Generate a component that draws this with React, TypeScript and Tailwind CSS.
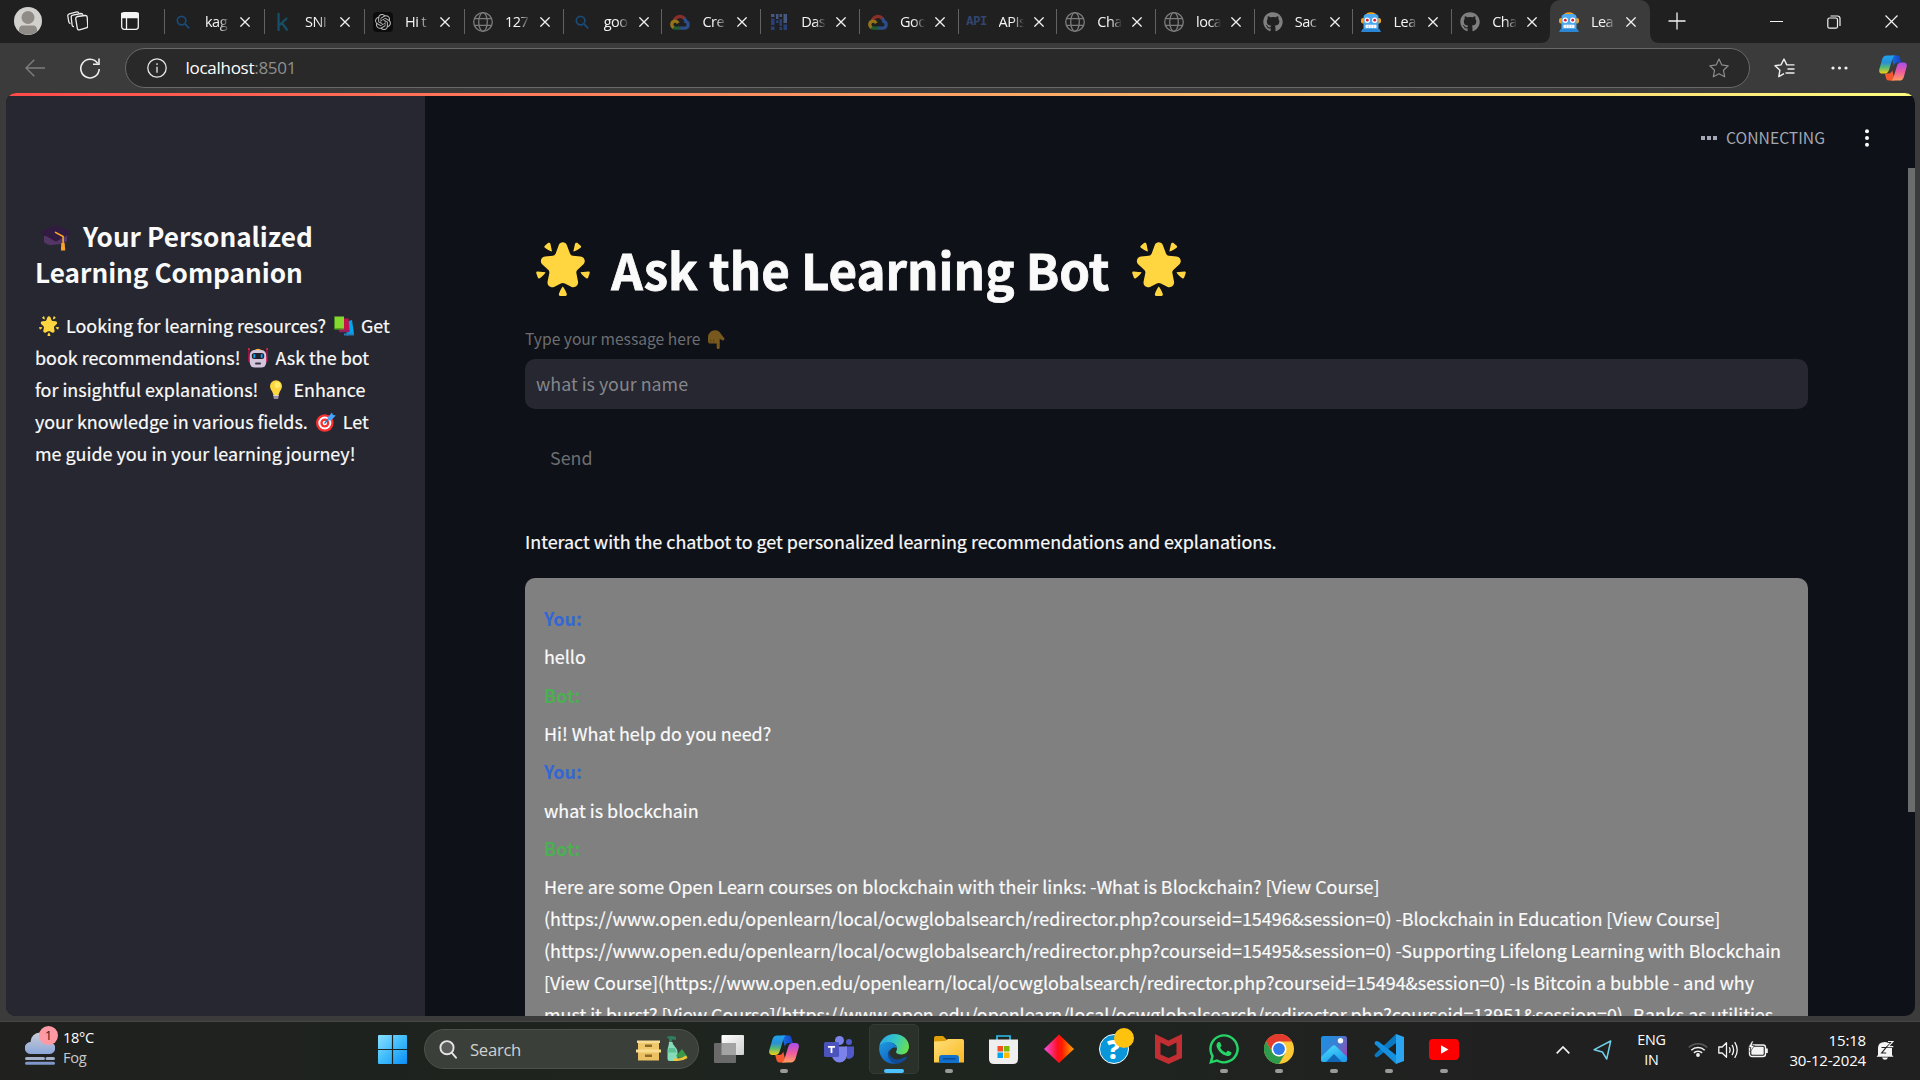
import React, { ReactNode } from "react";
import { FaGithub, FaWhatsapp } from "react-icons/fa";
import { SiOpenai } from "react-icons/si";

/* ---------- emoji drawings ---------- */

function StarEmoji({ className }: { className: string }) {
  return (
    <svg viewBox="0 0 54 54" className={className} fill="#ffd640">
      <path d="M22.7 3.2C24.2-.6 29.4-.6 30.900 3.200L34 11.500C34.400 12.700 35.500 13.600 36.800 13.700L44.600 14.500C48.600 15 50.200 19.800 47.200 22.500L41.600 27.700C40.600 28.600 40.100 29.900 40.400 31.300L42 39.500C42.800 43.500 38.800 46.500 35.200 44.700L28.900 41.400C27.600 40.700 26.100 40.700 24.800 41.400L18.500 44.700C14.900 46.500 10.800 43.500 11.600 39.500L13.300 31.300C13.600 29.900 13.100 28.600 12.100 27.700L6.400 22.500C3.400 19.800 5 15 9 14.500L16.800 13.700C18.100 13.600 19.200 12.700 19.700 11.500Z" />
      <path d="M12.300 .8C13.300.5 14.200 1 14.500 2L16 9.500C14 9.200 10.500 7.500 8.600 5.600C8.200 5 8.300 4.300 8.800 3.800ZM41.200.8C40.200.5 39.300 1 39 2L37.300 9.500C39.500 9.200 43 7.500 44.800 5.600C45.300 5 45.200 4.300 44.700 3.800ZM.3 31.200C0 30.300.6 29.500 1.500 29.500L9.600 30.300C8.400 32.500 6 35 3.700 36.300C3 36.700 2.200 36.500 1.900 35.800ZM53.700 31.200C54 30.300 53.400 29.500 52.500 29.500L44.400 30.300C45.600 32.500 48 35 50.300 36.300C51 36.700 51.800 36.500 52.100 35.800ZM26.800 44.500C28.300 46.200 30 49.500 30.800 52C31 53 30.500 53.800 29.500 54H24.200C23.200 53.800 22.600 53 22.900 52C23.600 49.500 25.200 46.200 26.800 44.500Z" />
    </svg>
  );
}

function CapEmoji({ className }: { className: string }) {
  return (
    <svg viewBox="0 0 30 26" className={className}>
      <path d="M3 11v6c2 3 7 3.500 12 2.500 5 0 9-1 11-3.500v-6z" fill="#533566" />
      <path d="M13.500.5c.8-.4 2-.4 2.800 0l12.900 6c.9.4.9 1.500 0 2L16.300 16c-.8.500-2 .500-2.800 0L.8 8.500c-.9-.5-.9-1.600 0-2z" fill="#321b41" />
      <path d="M14.500 7.300l7.600 4.200v7.500" fill="none" stroke="#ffa92b" strokeWidth="1.500" strokeLinecap="round" />
      <path d="M20.300 18h3.400l.5 7.500h-4.300z" fill="#f9a32b" />
    </svg>
  );
}

function BooksEmoji({ className }: { className: string }) {
  return (
    <svg viewBox="0 0 20 20" className={className}>
      <path d="M11 6l7-2 2 14-7 1.500z" fill="#00a6ed" />
      <path d="M10 17.500h10v2H10z" fill="#257eb8" />
      <path d="M6 2.500h8.500l1 12H6z" fill="#c5114d" />
      <path d="M4.500 14h11v2.300h-10z" fill="#902060" />
      <path d="M.5.500H10v12.300H.5z" fill="#86d72f" />
      <path d="M0 1l.8-.5v12H10v1.300H1.500c-1 0-1.500-.5-1.500-1.500z" fill="#44911b" />
    </svg>
  );
}

function RobotFaceEmoji({ className }: { className: string }) {
  return (
    <svg viewBox="0 0 20 20" className={className}>
      <path d="M.4 1.500h1.200V9h1v5H1.500C.6 14 .2 13.500.2 12.500zM19.600 1.500h-1.200V9h-1v5h1.100c.9 0 1.300-.5 1.300-1.500z" fill="#ca0b4a" />
      <circle cx=".9" cy="1" r=".9" fill="#f8312f" />
      <circle cx="19.100" cy="1" r=".9" fill="#f8312f" />
      <path d="M7 2.500Q7 .700 10 .700t3 1.800z" fill="#ffb02e" />
      <rect x="1.800" y="2" width="16.400" height="17.600" rx="5" fill="#d3c6dc" />
      <rect x="3.800" y="5" width="12.400" height="6" rx="2.500" fill="#241f2b" />
      <rect x="5.300" y="6" width="2" height="4" rx="1" fill="#00a6ed" />
      <rect x="12.700" y="6" width="2" height="4" rx="1" fill="#00a6ed" />
      <rect x="7" y="14.500" width="6" height="2" rx="1" fill="#3b3146" />
    </svg>
  );
}

function BulbEmoji({ className }: { className: string }) {
  return (
    <svg viewBox="0 0 20 20" className={className}>
      <path d="M10 .2a6 6 0 0 1 6 6c0 3.200-2.200 4.200-2.900 7.300-.2 1-.8 1.500-1.600 1.500h-3c-.8 0-1.400-.5-1.600-1.500C6.200 10.400 4 9.400 4 6.200a6 6 0 0 1 6-6z" fill="#fcd53f" />
      <circle cx="11.500" cy="5" r="3" fill="#fff478" opacity=".75" />
      <path d="M7.500 15h5v2.500c0 1-.8 1.500-1.500 1.500H9c-.7 0-1.500-.5-1.500-1.500z" fill="#998ea4" />
      <path d="M7.200 15h5.600v1H7.200z" fill="#d3d3d3" />
    </svg>
  );
}

function TargetEmoji({ className }: { className: string }) {
  return (
    <svg viewBox="0 0 20 20" className={className}>
      <circle cx="8.800" cy="11" r="8.800" fill="#f8312f" />
      <circle cx="8.800" cy="11" r="6.500" fill="#fff" />
      <circle cx="8.800" cy="11" r="4.500" fill="#f8312f" />
      <circle cx="8.800" cy="11" r="2.200" fill="#fff" />
      <path d="M8.500 11.500l5-5.500" stroke="#1377be" strokeWidth="1.200" />
      <path d="M11.500 5.500l4.500-5 .8 2.300 2.900.8-4.600 5-3.300-.4z" fill="#46a4fb" />
    </svg>
  );
}

function PointDownEmoji({ className }: { className: string }) {
  return (
    <svg viewBox="0 0 17 19" className={className}>
      <path d="M1.500 3C3 1 4.500.2 7 .2c3.500 0 5 1.800 6.500 4.500l2.700 3.400c1 1.600-1 3-2.500 1.900l-2-1.200v8.600c0 2-3 2-3 0v-3.800H2.500C.8 13.600 0 12.600 0 11V7C0 5.300.500 4.200 1.500 3z" fill="#77581e" />
      <path d="M2.700 9v4M5.700 9v4.200" stroke="#5c3f16" strokeWidth=".7" />
    </svg>
  );
}

/* ---------- favicons ---------- */

function SearchFav() {
  return (
    <svg viewBox="0 0 14 14" className="size-[14px]" fill="none" stroke="#194a78" strokeWidth="1.700">
      <circle cx="5.600" cy="5.600" r="4.300" />
      <path d="M8.900 8.900l4.300 4.500" />
    </svg>
  );
}
function KaggleFav() {
  return (
    <svg viewBox="0 0 12 18" className="h-[18px] w-3" fill="none" stroke="#14506a" strokeWidth="2.200">
      <path d="M1.600 0v18M10 5L2.500 12M4.500 9.500L10.500 17.500" />
    </svg>
  );
}
function OpenAiFav() {
  return (
    <span className="flex size-5 items-center justify-center rounded-[4px] bg-[#0c0c0c]">
      <SiOpenai className="size-4 text-[#b4b4b4]" />
    </span>
  );
}
function GlobeFav() {
  return (
    <svg viewBox="0 0 20 20" className="size-5" fill="none" stroke="#7c7c7c" strokeWidth="1.300">
      <circle cx="10" cy="10" r="9.300" />
      <ellipse cx="10" cy="10" rx="4.300" ry="9.300" />
      <path d="M1.500 6.700h17M1.500 13.300h17" />
    </svg>
  );
}
function CloudFav() {
  return (
    <svg viewBox="0 0 20 16" className="h-4 w-5" fill="none" strokeWidth="3.300">
      <path d="M4.300 6.500A5.900 5.900 0 0 1 14.500 4.600" stroke="#8a2f28" />
      <path d="M14 4.200c1.300 1 1.600 2.300 1.700 3.200 3.300.8 3.400 6.300-.7 6.700h-5" stroke="#2c4d87" />
      <path d="M10.300 14.100H5.200c-1 0-1.500-.2-2.300-.7" stroke="#1f5e33" />
      <path d="M3.500 13.600C1 12 1.100 7.700 4.800 7.200c1.600-.1 2.800.9 3.500 2" stroke="#94731a" />
    </svg>
  );
}
function DashFav() {
  return (
    <svg viewBox="0 0 16 16" className="size-4">
      <path d="M0 0h3.500v3H0zM5 0h2.500v5H5zM12.500 0H16v9h-3.500zM8.500 0H11v3H8.500z" fill="#46587f" />
      <path d="M0 4.500h3.500V11H0zM0 12.500h3.500V16H0zM5 6.500h2.500V9H5zM8.500 5H11v7H8.500zM8.500 13H11v3H8.500zM12.500 10.500H16V16h-3.500z" fill="#283f78" />
    </svg>
  );
}
function ApiFav() {
  return <span className="font-['Liberation_Mono'] text-[12px] leading-5 font-bold tracking-[-0.3px] text-[#33466f]">API</span>;
}
function GithubFav() {
  return <FaGithub className="size-5 text-[#7f7f7f]" />;
}
function BotFav() {
  return (
    <svg viewBox="0 0 20 20" className="size-5">
      <path d="M5.500 1.500Q10-.8 14.500 1.500L15 4H5z" fill="#f59f1d" />
      <rect y="6" width="20" height="5.500" rx="2" fill="#f59f1d" />
      <path d="M2.500 5.500Q2.500 2 6 2h8q3.500 0 3.500 3.500V17h-15z" fill="#4ea9ee" />
      <path d="M1.500 17h17l1.500 3H0z" fill="#2d86d2" />
      <circle cx="6.300" cy="8.200" r="2.700" fill="#fff" />
      <circle cx="13.700" cy="8.200" r="2.700" fill="#fff" />
      <circle cx="6.300" cy="8.200" r="1.400" fill="#d51d2f" />
      <circle cx="13.700" cy="8.200" r="1.400" fill="#d51d2f" />
      <rect x="4.500" y="12.700" width="11" height="3.200" rx="1" fill="#fff" />
      <path d="M7.300 12.700v3.200M10 12.700v3.200M12.700 12.700v3.200" stroke="#a9c6e2" strokeWidth=".7" />
    </svg>
  );
}

function CloseGlyph({ size }: { size: "sm" | "lg" }) {
  return (
    <svg viewBox="0 0 10 10" className={size === "sm" ? "size-[10px]" : "size-[13px]"} fill="none" stroke="#f2f2f2" strokeWidth={size === "sm" ? 1.3 : 0.9}>
      <path d="M.4.4l9.200 9.200M9.600.4L.4 9.600" />
    </svg>
  );
}

function CopilotIcon({ id, className }: { id: string; className: string }) {
  return (
    <svg viewBox="0 0 30 28" className={className}>
      <defs>
        <linearGradient id={id + "a"} x1="0" y1="0" x2="0" y2="1">
          <stop offset="0" stopColor="#1da4ee" />
          <stop offset=".4" stopColor="#2b90d5" />
          <stop offset=".65" stopColor="#53b87a" />
          <stop offset="1" stopColor="#f4cf10" />
        </linearGradient>
        <linearGradient id={id + "b"} x1="0" y1="0" x2="0" y2="1">
          <stop offset="0" stopColor="#a64df0" />
          <stop offset=".5" stopColor="#ee5aa0" />
          <stop offset="1" stopColor="#ff9d62" />
        </linearGradient>
        <linearGradient id={id + "c"} x1="0" y1="0" x2="1" y2="0">
          <stop offset="0" stopColor="#1a6fe0" />
          <stop offset="1" stopColor="#1440c8" />
        </linearGradient>
      </defs>
      <path d="M13 .5h6.500c2.200 0 2.700 1.300 3.200 3.200L23.800 8H20c-2.500 0-3.500 1.500-4.200 3.500z" fill={"url(#" + id + "c)"} />
      <path d="M17 27.500h-6.500c-2.200 0-2.700-1.300-3.200-3.200L6.200 20H10c2.500 0 3.500-1.500 4.200-3.500z" fill="#f4582f" />
      <path d="M8.500.5h9c-2 .5-2.600 2.300-3.200 4.200L10.800 16c-.8 2.600-2 4-4.600 4H3.500C.5 20-.3 18 .3 15.300L3.300 4.700C4.100 2 5.500.5 8.500.5z" fill={"url(#" + id + "a)"} />
      <path d="M21.500 27.500h-9c2-.5 2.600-2.300 3.200-4.200L19.200 12c.8-2.600 2-4 4.600-4h2.700c3 0 3.800 2 3.200 4.700l-3 10.600c-.8 2.700-2.200 4.200-5.200 4.200z" fill={"url(#" + id + "b)"} />
    </svg>
  );
}

/* ---------- browser chrome ---------- */

const tabs: { title: string; icon: ReactNode }[] = [
  { title: "kag", icon: <SearchFav /> },
  { title: "SNI", icon: <KaggleFav /> },
  { title: "Hi t", icon: <OpenAiFav /> },
  { title: "127", icon: <GlobeFav /> },
  { title: "goo", icon: <SearchFav /> },
  { title: "Cre", icon: <CloudFav /> },
  { title: "Das", icon: <DashFav /> },
  { title: "Goo", icon: <CloudFav /> },
  { title: "APIs", icon: <ApiFav /> },
  { title: "Cha", icon: <GlobeFav /> },
  { title: "loca", icon: <GlobeFav /> },
  { title: "Sac", icon: <GithubFav /> },
  { title: "Lea", icon: <BotFav /> },
  { title: "Cha", icon: <GithubFav /> },
];

function TabTitle({ children }: { children: ReactNode }) {
  return (
    <span className="h-5 w-[25px] shrink-0 text-[14.5px] leading-5 tracking-[-0.5px] whitespace-nowrap text-[#f5f5f5] [mask-image:linear-gradient(to_right,black_55%,transparent)]">
      {children}
    </span>
  );
}

function TabBar() {
  return (
    <div className="flex h-[43px] shrink-0 items-stretch bg-[#202020]">
      <div className="flex w-[164px] shrink-0 items-center pb-px">
        <svg viewBox="0 0 28 28" className="ml-[14px] size-7">
          <circle cx="14" cy="14" r="14" fill="#d2d0cd" />
          <circle cx="14" cy="10.500" r="6.500" fill="#8f8c88" />
          <path d="M5 24.500Q4.500 18.500 9 18.500h10q4.500 0 4 6A14 14 0 0 1 5 24.500z" fill="#8f8c88" />
        </svg>
        <svg viewBox="0 0 21 20" className="ml-[25px] h-5 w-[21px]" fill="none" stroke="#ededed" strokeWidth="1.300" strokeLinejoin="round">
          <path d="M10.500 5.500l7.500-1q2-.2 2.200 1.600l.6 9q0 1.500-1.600 1.800l-6.700 1.900q-2 .4-2.200-1.500L8.700 7.600q0-1.800 1.800-2.100z" />
          <path d="M7 15.500q-1.600.3-1.900-1.500L4.200 6.500q-.2-2 1.700-2.300L14 2.500q1.500 0 2 1.400" />
          <path d="M3.500 12.500q-1.400 0-1.700-1.600L.8 5q-.2-1.700 1.500-2.200L10 .8q1.400-.1 1.900 1.200" />
        </svg>
        <svg viewBox="0 0 18 18" className="ml-[33px] size-[18px]" fill="none" stroke="#f4f4f4" strokeWidth="1.300">
          <rect x=".7" y=".7" width="16.600" height="16.600" rx="2.500" />
          <path d="M.7 1.500h16.600v4H.7z" fill="#f4f4f4" />
          <path d="M5.500 5v12" />
        </svg>
      </div>
      {tabs.map((tab, i) => (
        <div key={i} className={i < 3 ? "flex w-[100px] shrink-0 items-center" : "flex w-[98.73px] shrink-0 items-center"}>
          <span className="h-[25px] w-px shrink-0 bg-[#626262]" />
          <span className="ml-2 flex w-5 shrink-0 justify-center">{tab.icon}</span>
          <span className="ml-3 flex">
            <TabTitle>{tab.title}</TabTitle>
          </span>
          <span className="ml-[10px]">
            <CloseGlyph size="sm" />
          </span>
        </div>
      ))}
      <div className="relative flex w-[100px] shrink-0 items-center rounded-t-[10px] bg-[#3b3b3b]">
        <svg viewBox="0 0 10 10" className="absolute bottom-0 -left-[10px] size-[10px]" fill="#3b3b3b">
          <path d="M10 0v10H0Q10 10 10 0z" />
        </svg>
        <svg viewBox="0 0 10 10" className="absolute -right-[10px] bottom-0 size-[10px]" fill="#3b3b3b">
          <path d="M0 0v10h10Q0 10 0 0z" />
        </svg>
        <span className="ml-[9px]">
          <BotFav />
        </span>
        <span className="ml-3 flex">
          <TabTitle>Lea</TabTitle>
        </span>
        <span className="ml-[10px]">
          <CloseGlyph size="sm" />
        </span>
      </div>
      <div className="ml-[18px] flex items-center pb-px">
        <svg viewBox="0 0 18 18" className="size-[18px]" stroke="#f2f2f2" strokeWidth="1.300">
          <path d="M9 .5v17M.5 9h17" />
        </svg>
      </div>
      <div className="ml-auto flex items-center pr-[22px]">
        <span className="h-px w-[13px] bg-[#f2f2f2]" />
        <svg viewBox="0 0 14 14" className="ml-11 size-[14px]" fill="none" stroke="#f2f2f2" strokeWidth="1.200">
          <rect x=".8" y="3" width="9.700" height="10.200" rx="1.800" />
          <path d="M3.500 1h7q2.500 0 2.500 2.500V11" />
        </svg>
        <span className="ml-11">
          <CloseGlyph size="lg" />
        </span>
      </div>
    </div>
  );
}

const starPath = "M10 1l2.800 5.900 6.400.9-4.700 4.500 1.200 6.500L10 15.700l-5.700 3.100 1.200-6.500L.8 7.800l6.400-.9z";

function Toolbar() {
  return (
    <div className="flex h-[50px] shrink-0 items-center bg-[#3b3b3b]">
      <svg viewBox="0 0 20 18" className="ml-[25px] h-[18px] w-5" fill="none" stroke="#7d7d7d" strokeWidth="1.400">
        <path d="M20 9H1M9.300.700L1 9l8.300 8.300" />
      </svg>
      <svg viewBox="0 0 20 21" className="ml-[35px] h-[21px] w-5" fill="none" stroke="#efefef" strokeWidth="1.600">
        <path d="M17.700 5.500A9.200 9.300 0 1 0 19.200 11" />
        <path d="M19 .5v5.800h-6" />
      </svg>
      <div className="ml-[25px] flex h-10 w-[1625px] items-center rounded-full border border-[#696969] bg-[#292929]">
        <svg viewBox="0 0 20 20" className="ml-[21px] size-5" fill="none" stroke="#e8e8e8" strokeWidth="1.300">
          <circle cx="10" cy="10" r="9.200" />
          <path d="M10 8.800v6M10 5.300v1.600" />
        </svg>
        <span className="ml-[18.500px] pb-px text-[17px] leading-6 tracking-[-0.28px] text-white">
          localhost<span className="text-[#8f8f8f]">:8501</span>
        </span>
        <svg viewBox="0 0 20 20" className="mr-[20px] ml-auto size-5" fill="none" stroke="#8c8c8c" strokeWidth="1.200" strokeLinejoin="round">
          <path d={starPath} />
        </svg>
      </div>
      <svg viewBox="0 0 21 20" className="ml-[24px] h-5 w-[21px]" fill="none" stroke="#f0f0f0" strokeWidth="1.400" strokeLinejoin="round">
        <path d="M10 15.700l-5.200 3 1.100-6.500L1 7.800l6-.9L10 1l2.800 5.900h7.700M13.500 11h7M11.500 15h9" />
      </svg>
      <svg viewBox="0 0 17 4" className="ml-9 h-1 w-[17px]" fill="#f0f0f0">
        <circle cx="2" cy="2" r="1.600" />
        <circle cx="8.500" cy="2" r="1.600" />
        <circle cx="15" cy="2" r="1.600" />
      </svg>
      <CopilotIcon id="top" className="ml-[31px] h-[26px] w-7" />
    </div>
  );
}

/* ---------- page ---------- */

function Sidebar() {
  const e = "mr-[3px] ml-1 inline-block size-5 align-[-3px]";
  return (
    <aside className="w-[419px] shrink-0 bg-[#262730] pl-[29px] whitespace-nowrap text-[#fafafa]">
      <h2 className="mt-[122px] text-[26.15px] leading-9 font-bold">
        <CapEmoji className="mr-[6px] ml-[6px] inline-block h-[26px] w-[30px] align-[-4px]" /> Your Personalized
        <br />
        Learning Companion
      </h2>
      <p className="mt-[19px] text-[17.92px] leading-8 [-webkit-text-stroke:0.2px_#fafafa]">
        <StarEmoji className={e} /> Looking for learning resources? <BooksEmoji className={e} /> Get
        <br />
        book recommendations! <RobotFaceEmoji className={e} /> Ask the bot
        <br />
        for insightful explanations! <BulbEmoji className={e} /> Enhance
        <br />
        your knowledge in various fields. <TargetEmoji className={e} /> Let
        <br />
        me guide you in your learning journey!
      </p>
    </aside>
  );
}

const messages: { who: "You:" | "Bot:"; lines: string[] }[] = [
  { who: "You:", lines: ["hello"] },
  { who: "Bot:", lines: ["Hi! What help do you need?"] },
  { who: "You:", lines: ["what is blockchain"] },
  {
    who: "Bot:",
    lines: [
      "Here are some Open Learn courses on blockchain with their links: -What is Blockchain? [View Course]",
      "(https://www.open.edu/openlearn/local/ocwglobalsearch/redirector.php?courseid=15496&session=0) -Blockchain in Education [View Course]",
      "(https://www.open.edu/openlearn/local/ocwglobalsearch/redirector.php?courseid=15495&session=0) -Supporting Lifelong Learning with Blockchain",
      "[View Course](https://www.open.edu/openlearn/local/ocwglobalsearch/redirector.php?courseid=15494&session=0) -Is Bitcoin a bubble - and why",
      "must it burst? [View Course](https://www.open.edu/openlearn/local/ocwglobalsearch/redirector.php?courseid=13951&session=0) -Banks as utilities",
    ],
  },
];

function Main() {
  return (
    <main className="relative flex grow flex-col pl-[100px] text-[17.92px] whitespace-nowrap text-[#fafafa]">
      <div className="mt-7 flex h-7 shrink-0 items-center justify-end self-stretch pr-[46px]">
        <span className="flex gap-[2px]">
          <i className="size-1 bg-[#a3a8b4]" />
          <i className="size-1 bg-[#a3a8b4]" />
          <i className="size-1 bg-[#a3a8b4]" />
        </span>
        <span className="ml-[9px] pb-px text-[15.7px] leading-7 text-[#a3a8b4]">CONNECTING</span>
        <svg viewBox="0 0 4 18" className="ml-10 h-[18px] w-1" fill="#fafafa">
          <circle cx="2" cy="2.200" r="2" />
          <circle cx="2" cy="9" r="2" />
          <circle cx="2" cy="15.800" r="2" />
        </svg>
      </div>
      <h1 className="mt-[84px] text-[49.23px] leading-[66px] font-bold [-webkit-text-stroke:0.8px_#fafafa]">
        <StarEmoji className="mr-[10.5px] ml-[10.5px] inline-block size-[54px] align-[-5.7px]" /> Ask the Learning Bot{" "}
        <StarEmoji className="ml-[11.5px] inline-block size-[54px] align-[-5.7px]" />
      </h1>
      <div className="mt-[23px] flex h-7 items-center text-[15.65px] leading-7 text-[#6d6e72]">
        Type your message here
        <PointDownEmoji className="ml-[7px] h-[19px] w-[17px]" />
      </div>
      <div className="mt-[6px] flex h-[50px] w-[1283px] shrink-0 items-center rounded-[10px] bg-[#262730] pb-px pl-[11px] text-[17.85px] text-[#85868b]">
        what is your name
      </div>
      <div className="mt-6 flex h-12 shrink-0 items-center pl-[25px] text-[17.85px] text-[#6d6e72]">Send</div>
      <p className="mt-[44px] leading-8 [-webkit-text-stroke:0.2px_#fafafa]">
        Interact with the chatbot to get personalized learning recommendations and explanations.
      </p>
      <div className="mt-[21px] flex w-[1283px] flex-col gap-[6.33px] rounded-t-[10px] bg-[#808080] pt-6 pl-[19px] leading-8">
        {messages.map((m, i) => (
          <React.Fragment key={i}>
            <div className={m.who === "You:" ? "font-bold text-[#3367d6]" : "font-bold text-[#4caf50]"}>{m.who}</div>
            <div className="shrink-0 [-webkit-text-stroke:0.2px_#fafafa]">
              {m.lines.map((line, j) => (
                <div key={j}>{line}</div>
              ))}
            </div>
          </React.Fragment>
        ))}
      </div>
      <div className="absolute top-[72px] right-0 h-[644px] w-[7px] bg-[#6b6c6e]" />
    </main>
  );
}

/* ---------- taskbar ---------- */

function EdgeIcon() {
  return (
    <svg viewBox="0 0 30 30" className="size-[30px]">
      <defs>
        <linearGradient id="edgeTop" x1="0" y1=".3" x2="1" y2=".6">
          <stop offset="0" stopColor="#2aa6e8" />
          <stop offset=".5" stopColor="#35c7c4" />
          <stop offset="1" stopColor="#6be04a" />
        </linearGradient>
        <linearGradient id="edgeLeft" x1="0" y1="0" x2=".6" y2="1">
          <stop offset="0" stopColor="#1f9be0" />
          <stop offset="1" stopColor="#0f63bf" />
        </linearGradient>
      </defs>
      <path d="M.3 12.500A15 15 0 0 1 15 0c9 0 15 6 15 12.500 0 5-3.500 8-7.500 8-3 0-5.500-1-5.500-2.500 0-1 1-1.500 1-3.500 0-3-3-6-7.500-6-4.500 0-8 2-10.200 4z" fill="url(#edgeTop)" />
      <path d="M.1 14C1 9.800 6 7.500 10.500 8.200c4.500.6 7.500 3.300 7.500 6.300-2.500-2.500-8 0-8 5.500 0 5 3.500 8.500 8 9.500C8 31.500 0 24 .1 14z" fill="url(#edgeLeft)" />
      <path d="M10.500 15.500c-1.500 7 5 11.500 10.500 9.500 2.500-.8 5-2 6.200-2.300.8-.1 1 .5.500 1.200C25.500 27 22 29.500 18 29.800 10 29 6.500 20 10.500 15.500z" fill="#134a94" />
    </svg>
  );
}

function TaskItem({ children, mark }: { children: ReactNode; mark?: boolean }) {
  return (
    <div className="flex h-[50px] w-[55px] shrink-0 flex-col items-center">
      <div className="flex h-[50px] items-center">{children}</div>
      <span className={mark ? "-mt-[5px] h-1 w-2 shrink-0 rounded-full bg-[#9a9a9a]" : "-mt-[5px] h-1 w-2 shrink-0"} />
    </div>
  );
}

function Taskbar() {
  return (
    <div className="flex h-[59px] shrink-0 items-center border-t border-[#474845] bg-[linear-gradient(90deg,#20211f_0%,#1e231e_25%,#1e251f_50%,#202220_70%,#202020_80%)] pb-1">
      <div className="ml-[25px] flex w-[353px] shrink-0">
        <div className="relative h-[33px] w-[30px]">
          <svg viewBox="0 0 30 33" className="h-[33px] w-[30px]">
            <defs>
              <linearGradient id="fog" x1="0" y1="0" x2="0" y2="1">
                <stop offset="0" stopColor="#c9cdd8" />
                <stop offset="1" stopColor="#8ca6d8" />
              </linearGradient>
            </defs>
            <path d="M6 22a6 6 0 0 1-.5-12 9.500 9.500 0 0 1 19 0A6 6 0 0 1 24 22z" fill="url(#fog)" />
            <path d="M1.500 26.500h17M22 26.500h6.500" stroke="#a5b0c9" strokeWidth="3" strokeLinecap="round" />
            <path d="M1.500 31.300h27" stroke="#7f98c9" strokeWidth="3" strokeLinecap="round" />
          </svg>
          <span className="absolute -top-[6px] left-[14px] flex size-[19px] items-center justify-center rounded-full bg-[#ff99a4] text-[13px] leading-none text-[#262626]">1</span>
        </div>
        <div className="-mt-[5px] ml-2 flex flex-col text-[14.6px] leading-5 tracking-[-0.3px]">
          <span className="text-white">18°C</span>
          <span className="text-[#c9c9c9]">Fog</span>
        </div>
      </div>
      <svg viewBox="0 0 29 29" className="size-[29px] shrink-0">
        <defs>
          <linearGradient id="win" x1="0" y1="0" x2="1" y2="1">
            <stop offset="0" stopColor="#8be0ff" />
            <stop offset=".5" stopColor="#40bcfb" />
            <stop offset="1" stopColor="#0a8ff5" />
          </linearGradient>
        </defs>
        <path d="M0 1q0-1 1-1h12.900v13.900H0zM15.100 0H28q1 0 1 1v12.900H15.100zM0 15.100h13.900V29H1q-1 0-1-1zM15.100 15.100H29V28q0 1-1 1H15.100z" fill="url(#win)" />
      </svg>
      <div className="ml-[17px] flex h-10 w-[275px] shrink-0 items-center rounded-full border border-[#4e514d] bg-[#3b3f3a]">
        <svg viewBox="0 0 18 19" className="ml-[14px] h-[19px] w-[18px]" fill="none" stroke="#e4e4e4" strokeWidth="1.900" strokeLinecap="round">
          <circle cx="8" cy="7.700" r="6.600" fill="#5a5d59" />
          <path d="M12.700 12.700l4.300 5" />
        </svg>
        <span className="ml-[13px] pt-0.5 text-[16.7px] leading-6 tracking-[-0.3px] text-[#d0d0d0]">Search</span>
        <svg viewBox="0 0 52 26" className="mr-[10px] ml-auto h-[26px] w-[52px]">
          <path d="M2 6h21v9H2z" fill="#f0c96c" />
          <path d="M1 4.500h23v2.500H1z" fill="#f7dc94" />
          <path d="M2 16h21v8.500H2z" fill="#ecc163" />
          <path d="M0 13.500h25v3H0z" fill="#f9dd8c" />
          <rect x="9" y="8.500" width="7" height="2.500" fill="#8b6a2a" />
          <rect x="9" y="18.500" width="7" height="2.500" fill="#8b6a2a" />
          <path d="M30.500 1q5-2 9.500 0v3l-4-.5v3h-3V3z" fill="#2f7d5a" />
          <path d="M33 6h3.500c0 4 5 5 5 10v7q0 2-2 2h-6q-2 0-2-2v-7c0-5 1.500-6 1.500-10z" fill="#86dcb9" />
          <path d="M33 12h5.500q2 2 2 4.500h-8.500q0-2.500 1-4.500z" fill="#5cc194" />
          <path d="M40 20l6-7 5.500 8-5 2.500z" fill="#3a9a48" />
          <path d="M37 22q7 2 13-2.500l1.500 2.500q-7 4.500-14.500 2.500z" fill="#f2c53a" />
        </svg>
      </div>
      <div className="flex items-center pl-[2px]">
        <TaskItem>
          <svg viewBox="0 0 30 28" className="h-7 w-[30px]">
            <defs>
              <linearGradient id="tv" x1="0" y1="0" x2="1" y2="1">
                <stop offset="0" stopColor="#fff" />
                <stop offset="1" stopColor="#cfcfcf" />
              </linearGradient>
            </defs>
            <rect x="7.500" width="22.500" height="20" rx="1" fill="url(#tv)" />
            <rect y="8" width="22" height="20" rx="1" fill="#6a6a6a" />
            <path d="M7.500 8H22v12H7.500z" fill="#a3a3a3" />
          </svg>
        </TaskItem>
        <TaskItem mark>
          <CopilotIcon id="bar" className="h-7 w-[30px]" />
        </TaskItem>
        <TaskItem>
          <svg viewBox="0 0 30 27" className="h-[27px] w-[30px]">
            <circle cx="15.500" cy="4.500" r="4.500" fill="#7b83eb" />
            <circle cx="25" cy="6" r="3" fill="#5059c9" />
            <path d="M21 10.500h9V18a5 5 0 0 1-7 4.500z" fill="#5059c9" />
            <path d="M8 10.500h15V19a7.500 7.500 0 0 1-15 0z" fill="#7b83eb" />
            <rect y="6" width="15" height="15" rx="1.500" fill="#4b53bc" />
            <path d="M4 10h7v1.700H8.400V17H6.600v-5.300H4z" fill="#fff" />
          </svg>
        </TaskItem>
        <div className="mx-[2.5px] flex h-[50px] w-[50px] shrink-0 flex-col items-center rounded-[5px] border border-[#343a34] bg-[#2a302a] pt-[9px]">
          <EdgeIcon />
          <span className="mt-[5px] h-1 w-5 shrink-0 rounded-full bg-[#4cc2ff]" />
        </div>
        <TaskItem mark>
          <svg viewBox="0 0 30 27" className="h-[27px] w-[30px]">
            <defs>
              <linearGradient id="fold" x1="0" y1="0" x2="1" y2="1">
                <stop offset="0" stopColor="#ffe07a" />
                <stop offset="1" stopColor="#f8b822" />
              </linearGradient>
            </defs>
            <path d="M0 2q0-2 2-2h7l4 4v5H0z" fill="#e09f08" />
            <path d="M0 5.500L11 5l3-2h14q2 0 2 2v21.500H0z" fill="url(#fold)" />
            <path d="M5 27v-5q0-3 3-3h14q3 0 3 3v5z" fill="#1170cc" />
            <path d="M9 22.800h12.500" stroke="#0a4a94" strokeWidth="1.500" />
          </svg>
        </TaskItem>
        <TaskItem>
          <svg viewBox="0 0 29 29" className="size-[29px]">
            <path d="M8 6V1h13v5" fill="none" stroke="#2bbdf0" strokeWidth="1.700" />
            <path d="M0 4.500h29V24q0 5-5 5H5q-5 0-5-5z" fill="#efefef" />
            <path d="M8.500 11H14v5.500H8.500z" fill="#f25022" />
            <path d="M15 11h5.500v5.500H15z" fill="#7fba00" />
            <path d="M8.500 17.500H14V23H8.500z" fill="#00a4ef" />
            <path d="M15 17.500h5.500V23H15z" fill="#ffb900" />
          </svg>
        </TaskItem>
        <TaskItem>
          <svg viewBox="0 0 30 30" className="size-[30px]">
            <defs>
              <linearGradient id="dia" x1="0" y1="0" x2="1" y2="0">
                <stop offset="0" stopColor="#f050e8" />
                <stop offset=".45" stopColor="#ff1020" />
                <stop offset=".6" stopColor="#ff1c00" />
                <stop offset="1" stopColor="#ffa800" />
              </linearGradient>
            </defs>
            <path d="M15 .5L30 15 15 29 0 15z" fill="url(#dia)" />
          </svg>
        </TaskItem>
        <TaskItem>
          <div className="relative flex size-[30px] items-center justify-center rounded-full border-[1.5px] border-white bg-[#0a97d9] text-[26px] leading-none font-extrabold text-white">
            ?<span className="absolute -top-[7px] left-[14px] size-5 rounded-full bg-[#ffc20e]" />
          </div>
        </TaskItem>
        <TaskItem>
          <svg viewBox="0 0 27 30" className="h-[30px] w-[27px]">
            <path d="M0 0l13.500 6.500L27 0v24l-13.500 6L0 24zM5.500 8.500v12l8 3.500 8-3.500v-12l-8 4z" fill="#c22e31" fillRule="evenodd" />
          </svg>
        </TaskItem>
        <TaskItem mark>
          <FaWhatsapp className="size-[34px] text-[#25d366]" />
        </TaskItem>
        <TaskItem mark>
          <svg viewBox="0 0 30 30" className="size-[30px]">
            <circle cx="15" cy="15" r="15" fill="#fcc934" />
            <path d="M2 7.500A15 15 0 0 1 28 7.500H15L8.500 18.700z" fill="#e33b2e" />
            <path d="M2 7.500l6.500 11.200L15 22.500l6.500-3.800L15 30A15 15 0 0 1 2 7.500z" fill="#2d9b4b" />
            <circle cx="15" cy="15" r="7.500" fill="#fff" />
            <circle cx="15" cy="15" r="5.900" fill="#2f7bea" />
          </svg>
        </TaskItem>
        <TaskItem mark>
          <svg viewBox="0 0 26 26" className="size-[26px]">
            <defs>
              <linearGradient id="pic" x1="0" y1="0" x2="1" y2=".5">
                <stop offset="0" stopColor="#1792e6" />
                <stop offset=".6" stopColor="#3d7fd0" />
                <stop offset="1" stopColor="#8652b8" />
              </linearGradient>
              <linearGradient id="mnt" x1="0" y1="0" x2=".6" y2="1">
                <stop offset="0" stopColor="#4fe0ff" />
                <stop offset="1" stopColor="#20a0ec" />
              </linearGradient>
            </defs>
            <rect width="26" height="26" rx="2.500" fill="url(#pic)" />
            <path d="M0 21L11.500 9.800q1.500-1.300 3 0L26 21v2.500q0 2.500-2.500 2.500h-21Q0 26 0 23.500z" fill="url(#mnt)" />
            <path d="M5 26l8-8 8 8z" fill="#1268b8" />
            <circle cx="19.500" cy="4.700" r="2.700" fill="#f3f7fb" />
          </svg>
        </TaskItem>
        <TaskItem mark>
          <svg viewBox="0 0 30 30" className="size-[30px]">
            <path d="M22 0l8 3v24l-8 3z" fill="#2ba5f2" />
            <path d="M22 0v9L4.500 22.500 2 23.500.500 21.500 1 20z" fill="#0a79c2" />
            <path d="M22 30v-9L4.500 7.500 2 7 .5 8.500 1 10.300z" fill="#1490df" />
          </svg>
        </TaskItem>
        <TaskItem mark>
          <svg viewBox="0 0 30 21" className="h-[21px] w-[30px]">
            <rect width="30" height="21" rx="4" fill="#fe0000" />
            <path d="M12 6.200l7.500 4.300-7.500 4.300z" fill="#fff" />
          </svg>
        </TaskItem>
      </div>
      <div className="ml-auto flex shrink-0 items-center pt-px pr-[26px] text-white">
        <svg viewBox="0 0 14 8" className="h-2 w-[14px]" fill="none" stroke="#f2f2f2" strokeWidth="1.700">
          <path d="M.7 7.300L7 1l6.300 6.300" />
        </svg>
        <svg viewBox="0 0 19 20" className="ml-[23px] h-5 w-[19px]" fill="none" stroke="#70d0ea" strokeWidth="1.500" strokeLinejoin="round">
          <path d="M17.700 1L1.200 9.700l8.200 2.300 4.300 7z" />
        </svg>
        <div className="ml-[24px] flex w-[30px] flex-col items-center text-[14.3px] leading-5 tracking-[-0.2px]">
          <span>ENG</span>
          <span>IN</span>
        </div>
        <svg viewBox="0 0 20 15" className="ml-[22px] h-[15px] w-5" fill="none" strokeWidth="1.600">
          <path d="M.8 5.500a13 13 0 0 1 18.400 0" stroke="#5b5b5b" />
          <g stroke="#f4f4f4">
            <path d="M3.300 8.200a9.600 9.600 0 0 1 13.400 0M5.900 10.800a6 6 0 0 1 8.200 0" />
          </g>
          <circle cx="10" cy="13" r="1.900" fill="#f4f4f4" />
        </svg>
        <svg viewBox="0 0 21 18" className="ml-[10px] h-[18px] w-[21px]" fill="none" stroke="#f4f4f4" strokeWidth="1.300" strokeLinejoin="round">
          <path d="M.8 6v6h3.400l4.300 4.300V1.700L4.200 6z" />
          <path d="M11.300 6.200q1.600 2.800 0 5.600M14 3.800q3.200 5.200 0 10.400M16.700 1.200q5 7.800 0 15.600" />
        </svg>
        <svg viewBox="0 0 20 17" className="ml-[9px] h-[17px] w-5">
          <rect x="1.500" y="4" width="16" height="11.500" rx="2.500" fill="none" stroke="#f4f4f4" strokeWidth="1.400" />
          <rect x="3.300" y="5.800" width="12.400" height="8" rx="1" fill="#f4f4f4" />
          <path d="M18 7.500h1.800v4.500H18z" fill="#f4f4f4" />
          <path d="M3.800 0L.3 6.500h2.500L2 11l4.500-6.500H4L5.500 0z" fill="#f4f4f4" stroke="#202020" strokeWidth=".6" />
        </svg>
        <div className="ml-[21px] flex flex-col items-end text-[15px] leading-5 tracking-[-0.17px]">
          <span>15:18</span>
          <span>30-12-2024</span>
        </div>
        <svg viewBox="0 0 18 20" className="ml-[10px] h-5 w-[18px]">
          <path d="M2 15V8q0-6 7-6t7 6v7l1.500 1.700H.5z" fill="#f4f4f4" />
          <path d="M6 17.500h6q-.8 2.300-3 2.300t-3-2.300z" fill="#f4f4f4" />
          <path d="M5.500 7.500h4.500L5.700 13h4.500" fill="none" stroke="#202020" strokeWidth="1.200" />
          <path d="M11.500 1.500h6L12 6.700h5.500" fill="none" stroke="#202020" strokeWidth="2.600" />
          <path d="M12 1.500h5L12.300 6.700h5" fill="none" stroke="#f4f4f4" strokeWidth="1.200" />
        </svg>
      </div>
    </div>
  );
}

export default function App() {
  return (
    <div className="flex h-[1080px] w-[1920px] flex-col overflow-hidden bg-[#3b3b3b] font-['Open_Sans','Noto_Sans',sans-serif]">
      <TabBar />
      <Toolbar />
      <div className="mr-[5px] ml-[6px] flex h-[923px] shrink-0 flex-col overflow-hidden rounded-[10px] bg-[#0e1117] font-['Noto_Sans_CJK_SC',sans-serif]">
        <div className="h-[3px] shrink-0 bg-[linear-gradient(90deg,#ff4b4b,#fffd80)]" />
        <div className="flex min-h-0 grow">
          <Sidebar />
          <Main />
        </div>
      </div>
      <div className="h-[5px] shrink-0" />
      <Taskbar />
    </div>
  );
}
